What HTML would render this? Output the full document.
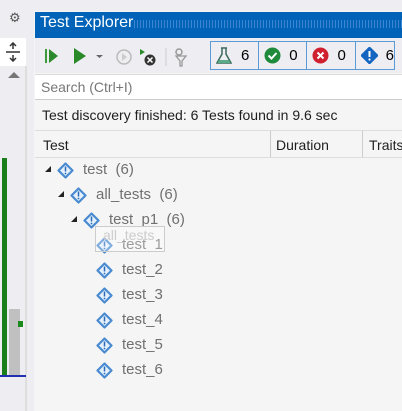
<!DOCTYPE html><html><head><style>
body{margin:0;width:402px;height:411px;background:#eeeef2;font-family:"Liberation Sans","DejaVu Sans",sans-serif;position:relative;overflow:hidden}
.a{position:absolute}
.t{font-size:14px;color:#1e1e1e}
</style></head><body>
<div class="a" style="left:0;top:0;width:34px;height:411px;background:#eeeef2"></div>
<div class="a" style="left:9px;top:10px;font-size:13px;color:#555">⚙</div>
<div class="a" style="left:0;top:38px;width:26px;height:28px;background:#fff"></div>
<svg class="a" style="left:5px;top:42px" width="16" height="20"><path d="M8 1v6M5 4l3-3 3 3M8 19v-6M5 16l3 3 3-3M1 10h14" stroke="#333" stroke-width="1.5" fill="none"/></svg>
<div class="a" style="left:8px;top:72px;width:0;height:0;border-left:6px solid transparent;border-right:6px solid transparent;border-bottom:6px solid #777"></div>
<div class="a" style="left:25px;top:66px;width:2px;height:345px;background:#ddd"></div>
<div class="a" style="left:2px;top:158px;width:5px;height:217px;background:#1a7f1a"></div>
<div class="a" style="left:9px;top:309px;width:11px;height:66px;background:#c0c0c0"></div>
<div class="a" style="left:18px;top:321px;width:5px;height:6px;background:#1a8a1a"></div>
<div class="a" style="left:0;top:375px;width:26px;height:2px;background:#2030b0"></div>
<div class="a" style="left:34px;top:11px;width:368px;height:400px;background:#f5f5f5"></div>
<div class="a" style="left:35px;top:12px;width:367px;height:26px;background:#0063b8"></div>
<div class="a" style="left:134px;top:20px;width:268px;height:8px;background:repeating-linear-gradient(90deg,#3a86d0 0 1px,transparent 1px 3px)"></div>
<div class="a" style="left:40px;top:14px;font-size:16px;color:#fff">Test Explorer</div>
<div class="a" style="left:35px;top:38px;width:367px;height:35px;background:#eeeef2"></div>
<svg class="a" style="left:44px;top:46px" width="150" height="22">
<path d="M2 3v14" stroke="#3a9a3a" stroke-width="2"/><path d="M5 3l9 7-9 7z" fill="#2a8a2a"/>
<path d="M30 2l12 8-12 8z" fill="#2a8a2a"/><path d="M52 9h7l-3.5 3z" fill="#666"/>
<circle cx="80" cy="11" r="7" stroke="#bbb" stroke-width="1.5" fill="none"/><path d="M78 7l5 4-5 4z" fill="#ccc"/>
<path d="M96 3l5 3-5 3z" fill="#2a8a2a"/><circle cx="106" cy="14" r="5.5" fill="#333"/><path d="M103.5 11.5l5 5M108.5 11.5l-5 5" stroke="#fff" stroke-width="1.5"/>
<path d="M122 2v18" stroke="#ccc"/><circle cx="135" cy="6" r="3" stroke="#999" fill="none" stroke-width="1.5"/><path d="M132 10h10l-4 5v5h-2v-5z" stroke="#999" fill="none" stroke-width="1.3"/>
</svg>
<div class="a" style="left:210px;top:41px;width:185px;height:29px;border:1px solid #5b9bd5;box-sizing:border-box;display:flex">
<div style="width:45px;border-right:1px solid #5b9bd5;display:flex;align-items:center;padding-left:5px;font-size:15px;gap:9px"><svg width="16" height="18"><path d="M5 1h6M6 1v6l-5 9h14l-5-9V1" stroke="#3a6a5a" fill="none" stroke-width="1.5"/><path d="M3 13h10l1.5 3h-13z" fill="#5aaa8a"/></svg>6</div>
<div style="width:45px;border-right:1px solid #5b9bd5;display:flex;align-items:center;padding-left:5px;font-size:15px;gap:8px"><svg width="17" height="17"><circle cx="8.5" cy="8.5" r="8" fill="#1e8a3a"/><path d="M4.5 8.5l3 3 5-5.5" stroke="#fff" stroke-width="2" fill="none"/></svg>0</div>
<div style="width:45px;border-right:1px solid #5b9bd5;display:flex;align-items:center;padding-left:5px;font-size:15px;gap:8px"><svg width="17" height="17"><circle cx="8.5" cy="8.5" r="8" fill="#d02030"/><path d="M5.5 5.5l6 6M11.5 5.5l-6 6" stroke="#fff" stroke-width="2"/></svg>0</div>
<div style="display:flex;align-items:center;padding-left:5px;font-size:15px;gap:8px"><svg width="17" height="17"><path d="M8.5 1l7.5 7.5-7.5 7.5-7.5-7.5z" fill="#1565c0" stroke="#1565c0" stroke-linejoin="round" stroke-width="2.5"/><path d="M8.5 4v6" stroke="#fff" stroke-width="2"/><circle cx="8.5" cy="12.5" r="1.1" fill="#fff"/></svg>6</div>
</div>
<div class="a" style="left:35px;top:74px;width:367px;height:26px;background:#fff;border-top:1px solid #ddd;border-bottom:1px solid #ccc;box-sizing:border-box"></div>
<div class="a" style="left:41px;top:79px;font-size:14px;color:#777">Search (Ctrl+I)</div>
<div class="a t" style="left:42px;top:107px">Test discovery finished: 6 Tests found in 9.6 sec</div>
<div class="a" style="left:35px;top:130px;width:367px;height:28px;background:#f5f5f5;border-top:1px solid #ddd;border-bottom:1px solid #ddd;box-sizing:border-box"></div>
<div class="a t" style="left:43px;top:137px">Test</div>
<div class="a" style="left:270px;top:131px;width:1px;height:26px;background:#ccc"></div>
<div class="a t" style="left:276px;top:137px">Duration</div>
<div class="a" style="left:362px;top:131px;width:1px;height:26px;background:#ccc"></div>
<div class="a t" style="left:369px;top:137px">Traits</div>
<div id="tree"></div>
<svg width="0" height="0" style="position:absolute"><defs><g id="ic"><path d="M8.5 1.5l7 7-7 7-7-7z" fill="#e4f0fb" stroke="#4a8ad0" stroke-width="2.2" stroke-linejoin="round"/><path d="M8.5 4.5v5" stroke="#2a6ab8" stroke-width="1.5"/><circle cx="8.5" cy="11.5" r="0.9" fill="#2a6ab8"/></g></defs></svg>
<div class="a" style="left:95px;top:226px;width:68px;height:24px;border:1px solid #ccc;background:rgba(255,255,255,.3)"></div>
<div class="a" style="left:103px;top:227px;font-size:14px;color:#ccc">all_tests</div>
<script>
var rows=[[44,171,1,"test","(6)"],[57,196,1,"all_tests","(6)"],[70,221,1,"test_p1","(6)"],[83,246,0,"test_1"],[83,271,0,"test_2"],[83,296,0,"test_3"],[83,321,0,"test_4"],[83,346,0,"test_5"],[83,371,0,"test_6"]];
var h="";rows.forEach(function(r){
if(r[2])h+='<div class="a" style="left:'+(r[0]+1)+'px;top:'+(r[1]-5)+'px;width:0;height:0;border-left:6px solid transparent;border-bottom:6px solid #222"></div>';
h+='<svg class="a" style="left:'+(r[0]+13)+'px;top:'+(r[1]-9)+'px" width="17" height="17"><use href="#ic"/></svg>';
h+='<div class="a" style="left:'+(r[0]+39)+'px;top:'+(r[1]-10)+'px;font-size:15px;color:#707070">'+r[3]+(r[4]?'&nbsp; '+r[4]:'')+'</div>';});
document.getElementById("tree").innerHTML=h;
</script>
</body></html>
